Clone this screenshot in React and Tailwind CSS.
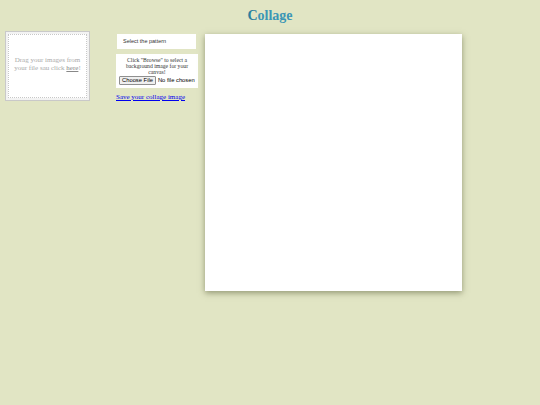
import React from 'react';

const serif = { fontFamily: '"Liberation Serif", serif' };
const sans = { fontFamily: '"Liberation Sans", sans-serif' };

const App = () => {
  return (
    <div className="min-h-[405px] w-full bg-[#e1e5c4]" style={serif}>
      <h1 className="pt-[7px] text-center text-[14px] font-bold leading-[18px] text-[#3b97b6]">
        <span className="text-[#2a7f9e]">C</span>ollage
      </h1>
      <div className="mt-[6px] flex items-start">
        <div className="ml-[5px] w-[85px] border border-[#c9c9c9] bg-[#f3f3f3] p-[2px]">
          <div className="flex h-[64px] items-center justify-center border border-dotted border-[#c8c8c8] bg-white pb-[5px] text-center text-[7px] leading-[8px] text-[#aaa]">
            <p>Drag your images from your file sau click <span className="whitespace-nowrap"><a className="text-[#888] underline">here</a>!</span></p>
          </div>
        </div>
        <div className="ml-[26px] mt-[3px] flex w-[82px] flex-col">
          <div className="ml-[1px] w-[79px] bg-white py-[4px] pl-[6px] text-[5.5px] leading-[7px] text-[#333]" style={sans}>
            Select the pattern
          </div>
          <div className="mt-[5px] bg-white px-[3px] pt-[3px] pb-[3px] text-center text-[5.7px] leading-[6px] text-[#333]">
            <p className="px-[4px]">Click "Browse" to select a background image for your canvas!</p>
            <label className="mt-[1px] flex items-center whitespace-nowrap text-[5.8px] leading-[7px] text-black" style={sans}>
              <span className="shrink-0 whitespace-nowrap rounded-[1px] border border-[#8f8f8f] bg-[#efefef] px-[2px]">Choose File</span>
              <span className="ml-[2px] whitespace-nowrap">No file chosen</span>
            </label>
          </div>
          <a href="#" className="mt-[5px] text-[7px] leading-[9px] text-[#0000ee] underline">Save your collage image</a>
        </div>
        <div className="ml-[7px] mt-[3px] h-[257px] w-[257px] bg-white shadow-[0_2px_6px_rgba(80,85,50,0.55)]"></div>
      </div>
    </div>
  );
};

export default App;
